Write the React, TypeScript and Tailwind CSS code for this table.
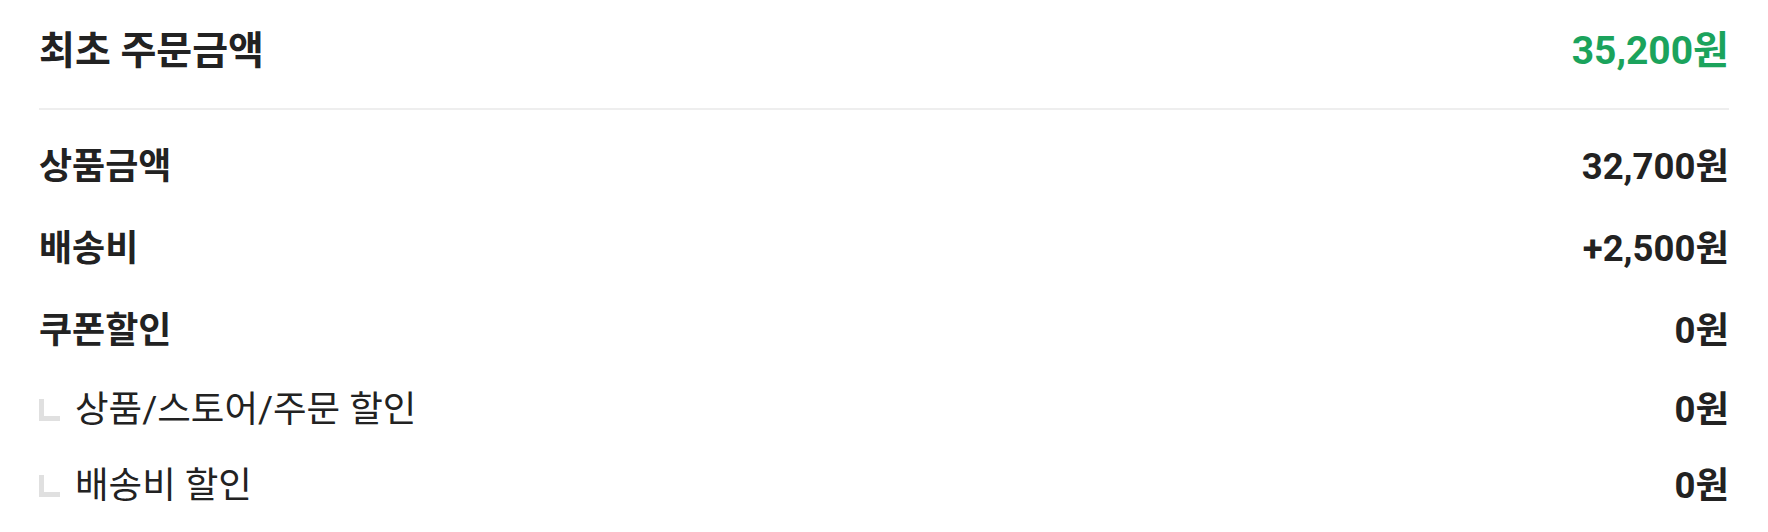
const font = { fontFamily: 'Roboto, "Noto Sans CJK KR", sans-serif' };

type Row = { label: string; value: string; sub?: boolean };

const rows: Row[] = [
  { label: "상품금액", value: "32,700원" },
  { label: "배송비", value: "+2,500원" },
  { label: "쿠폰할인", value: "0원" },
  { label: "상품/스토어/주문 할인", value: "0원", sub: true },
  { label: "배송비 할인", value: "0원", sub: true },
];

const SubMark = () => (
  <span className="mr-[15px] inline-block h-[22px] w-[21px] border-b-[5px] border-l-[5px] border-[#e0e0e0]" />
);

export default function App() {
  return (
    <div className="min-h-screen bg-white text-[#222222]" style={font}>
      <div className="px-[39px]">
        {/* 최초 주문금액 */}
        <div className="flex h-[110px] items-center justify-between border-b-2 border-[#eeeeee] pb-[5px]">
          <span className="text-[39px] font-bold">최초 주문금액</span>
          <span className="text-[39px] font-bold text-[#1ba35c]">35,200원</span>
        </div>

        <div className="pt-[16px]">
          {rows.map((row) => (
            <div
              key={row.label}
              className={`flex items-center justify-between ${row.sub ? "h-[76px]" : "h-[82px]"}`}
            >
              <div className="flex items-center">
                {row.sub && <SubMark />}
                <span className={row.sub ? "text-[36.5px] font-normal" : "text-[36px] font-bold"}>{row.label}</span>
              </div>
              <span className="text-[36.5px] font-bold">{row.value}</span>
            </div>
          ))}
        </div>
      </div>
    </div>
  );
}
